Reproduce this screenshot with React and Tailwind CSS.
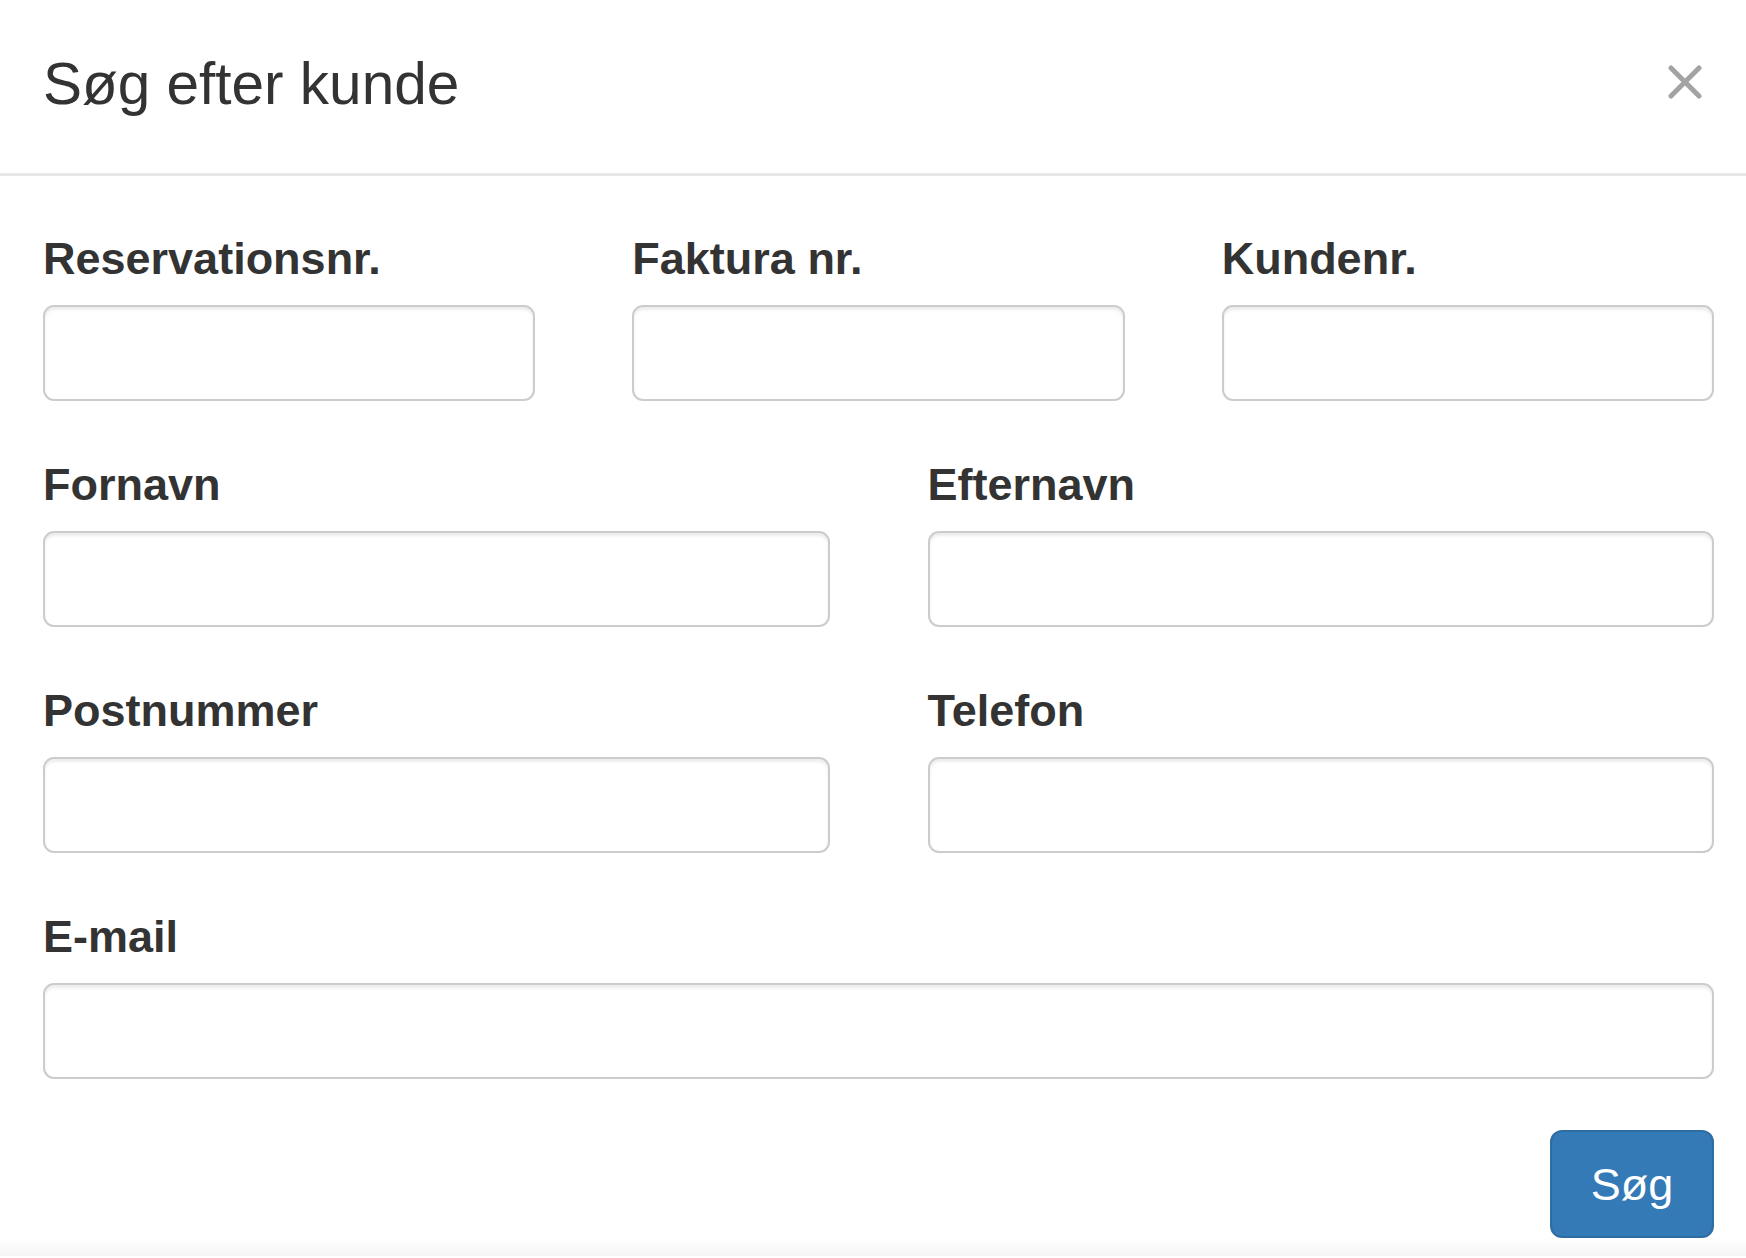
import React from "react";

const Field = ({ label }) => (
  <div>
    <label className="block text-[45px] font-bold leading-[64px] mb-[14px] text-[#333]">
      {label}
    </label>
    <input
      type="text"
      className="block w-full h-[96px] border-2 border-[#cccccc] rounded-[11px] bg-white shadow-[inset_0_3px_3px_rgba(0,0,0,0.075)] outline-none"
    />
  </div>
);

const App = () => {
  return (
    <div
      className="min-h-screen bg-white text-[#333]"
      style={{ fontFamily: '"Liberation Sans", Arial, sans-serif' }}
    >
      {/* Header */}
      <div className="h-[176px] border-b-[3px] border-[#e8e8e8] pl-[43px] pr-[44px] pt-[52px] flex justify-between items-start">
        <h4 className="text-[58.5px] leading-[64px] font-normal text-[#333]">
          Søg efter kunde
        </h4>
        <button aria-label="Luk" className="mt-[13px] w-[34px] h-[34px] flex items-center justify-center">
          <svg width="34" height="34" viewBox="0 0 34 34">
            <path
              d="M3 3 L31 31 M31 3 L3 31"
              stroke="#a3a3a3"
              strokeWidth="5"
              strokeLinecap="round"
            />
          </svg>
        </button>
      </div>

      {/* Body */}
      <div className="pl-[43px] pr-[32px] pt-[51px]">
        <div className="grid grid-cols-3 gap-x-[97px] mb-[52px]">
          <Field label="Reservationsnr." />
          <Field label="Faktura nr." />
          <Field label="Kundenr." />
        </div>
        <div className="grid grid-cols-2 gap-x-[98px] mb-[52px]">
          <Field label="Fornavn" />
          <Field label="Efternavn" />
        </div>
        <div className="grid grid-cols-2 gap-x-[98px] mb-[52px]">
          <Field label="Postnummer" />
          <Field label="Telefon" />
        </div>
        <Field label="E-mail" />

        <div className="flex justify-end mt-[51px]">
          <button className="w-[164px] h-[108px] rounded-[12px] bg-[#337ab7] border-2 border-[#2e6da4] text-white text-[45px] leading-none">
            Søg
          </button>
        </div>
      </div>
      <div className="h-[18px] bg-gradient-to-b from-white to-[#f5f5f5]" />
    </div>
  );
};

export default App;
